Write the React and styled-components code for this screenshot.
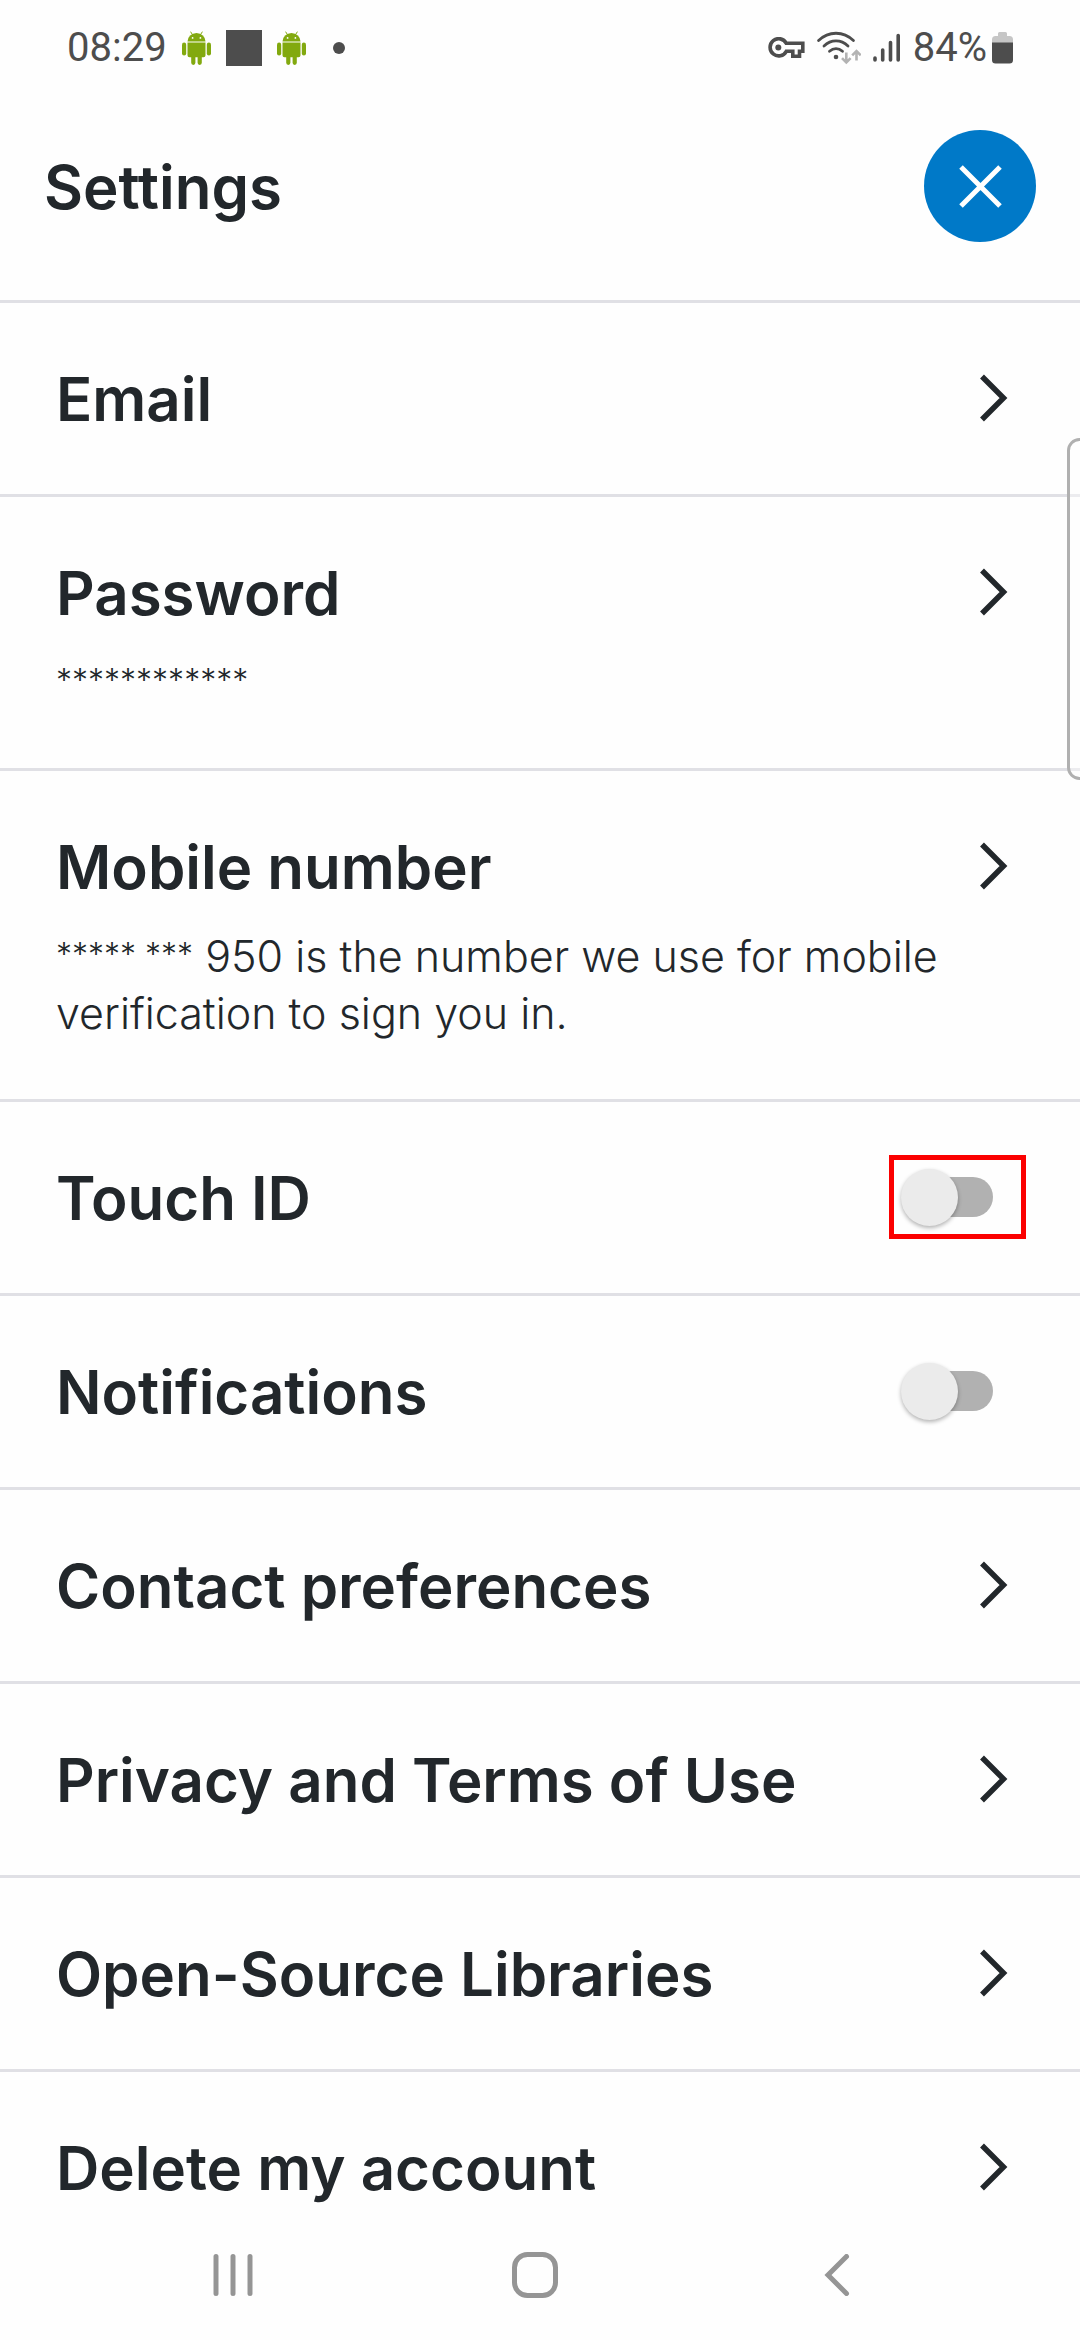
import React from "react";
import styled, { createGlobalStyle, css } from "styled-components";

const ink = "#22272b";
const statusInk = "#4d4d4d";
const rule = "#e0e0e5";

const GlobalStyle = createGlobalStyle`
  *, *::before, *::after { box-sizing: border-box; }
  body { margin: 0; background: #fefefe; }
`;

const Screen = styled.div`
  position: relative;
  display: flex;
  flex-direction: column;
  height: 100vh;
  overflow: hidden;
  background: #fefefe;
  color: ${ink};
  font-family: Inter, "Open Sans", sans-serif;
`;

const StatusBar = styled.div`
  display: flex;
  flex: none;
  align-items: center;
  justify-content: space-between;
  height: 95px;
  padding: 0 67px;
  color: ${statusInk};
  font: 400 40px/48px Roboto, sans-serif;
`;

const StatusGroup = styled.div`
  display: flex;
  align-items: center;
  gap: ${({ $gap }) => $gap}px;
`;

const NotificationSquare = styled.span`
  width: 36px;
  height: 36px;
  background: ${statusInk};
`;

const MoreDot = styled.span`
  width: 12px;
  height: 12px;
  margin-left: 12px;
  border-radius: 50%;
  background: ${statusInk};
`;

const Header = styled.header`
  display: flex;
  flex: none;
  align-items: center;
  justify-content: space-between;
  padding: 35px 44px 58px;
  border-bottom: 3px solid ${rule};
`;

const titleText = css`
  padding-top: 2px;
  font-size: 60px;
  font-weight: 600;
  line-height: 70px;
`;

const PageTitle = styled.h1`
  ${titleText}
  margin: 0;
`;

const CloseButton = styled.button`
  display: grid;
  place-items: center;
  width: 112px;
  height: 112px;
  padding: 0;
  border: 0;
  border-radius: 50%;
  background: #0079c8;
  color: #fff;
`;

const SettingsList = styled.ul`
  flex: 1;
  min-height: 0;
  margin: 0;
  padding: 0;
  overflow-y: auto;
  scrollbar-width: none;
  list-style: none;
`;

const SettingsItem = styled.li`
  border-bottom: 3px solid ${rule};

  &:last-child {
    border-bottom: 0;
  }
`;

const rowLayout = css`
  display: flex;
  flex-direction: column;
  gap: 20px;
  width: 100%;
  padding: 53px 54px 54px 56px;
`;

const LinkRow = styled.button`
  ${rowLayout}
  border: 0;
  background: none;
  color: inherit;
  font-family: inherit;
  text-align: left;
`;

const ToggleRow = styled.label`
  ${rowLayout}
`;

const RowMain = styled.span`
  display: flex;
  align-items: center;
  justify-content: space-between;
  width: 100%;
  height: 84px;
`;

const RowTitle = styled.span`
  ${titleText}
`;

const RowDetail = styled.span`
  padding: 0 40px 3px 0;
  font-size: 43px;
  font-weight: 300;
  line-height: 57px;
`;

const Mask = styled.span`
  font-size: 32px;
  line-height: 32px;
  vertical-align: 6px;
`;

const ChevronCell = styled.span`
  display: flex;
  padding-right: 18px;
`;

const SwitchCell = styled.span`
  display: flex;
  align-items: center;
  width: 137px;
  height: 84px;
  padding-left: 7px;
  border: 5px solid ${({ $highlighted }) => ($highlighted ? "#fb0000" : "transparent")};
`;

const Switch = styled.input`
  appearance: none;
  display: flex;
  align-items: center;
  width: 92px;
  height: 40px;
  margin: 0;
  border-radius: 20px;
  background: linear-gradient(#b1b1b1, #b1b1b1) right / 76px 40px no-repeat;

  &::before {
    content: "";
    width: 57px;
    height: 57px;
    flex: none;
    border-radius: 50%;
    background: #ebebeb;
    box-shadow: 0 2px 4px rgba(0, 0, 0, 0.3);
  }

  &:checked {
    justify-content: flex-end;
  }
`;

const EdgeHandle = styled.div`
  position: absolute;
  top: 438px;
  right: -12px;
  width: 25px;
  height: 342px;
  border: 3px solid #b0b0b0;
  border-radius: 13px;
  background: rgba(255, 255, 255, 0.4);
`;

const NavBar = styled.nav`
  display: grid;
  flex: none;
  grid-template-columns: repeat(3, 1fr);
  height: 130px;
  padding: 0 92px 0 82px;
  background: #fefefe;
`;

const NavButton = styled.button`
  display: grid;
  place-items: center;
  padding: 0;
  border: 0;
  background: none;
  color: #959595;
`;

const AndroidIcon = () => (
  <svg width="29" height="34" viewBox="0 0 29 34" fill="#82a90f" aria-hidden="true">
    <path d="M5.5 10.5a9 8.6 0 0 1 18 0z" />
    <path d="M8.8 1l2 3.2M20.2 1l-2 3.2" stroke="#82a90f" strokeWidth="1" strokeLinecap="round" />
    <circle cx="10.6" cy="6.9" r="0.9" fill="#fff" />
    <circle cx="18.4" cy="6.9" r="0.9" fill="#fff" />
    <path d="M5.5 11.6h18v12.6a2 2 0 0 1-2 2h-1.7v5.6a2.1 2.1 0 0 1-4.2 0v-5.6h-2.2v5.6a2.1 2.1 0 0 1-4.2 0v-5.6H7.5a2 2 0 0 1-2-2z" />
    <rect x="0" y="11.6" width="4.2" height="13" rx="2.1" />
    <rect x="24.8" y="11.6" width="4.2" height="13" rx="2.1" />
  </svg>
);

const KeyIcon = () => (
  <svg width="37" height="22" viewBox="0 0 37 22" fill="none" stroke={statusInk} strokeWidth="3.6" aria-hidden="true">
    <path d="M18.3 6.3H34.8v8H31.5v5H24.8v-5H18.3A8.6 8.6 0 1 1 18.3 6.3z" />
    <circle cx="10.3" cy="10.6" r="3" fill={statusInk} stroke="none" />
  </svg>
);

const WifiIcon = () => (
  <svg width="44" height="34" viewBox="0 0 44 34" fill="none" aria-hidden="true">
    <g stroke={statusInk} strokeWidth="2.8" strokeLinecap="round">
      <path d="M1.6 9.6C11.5-.2 26.5-.2 36.4 9.6" />
      <path d="M7 15C14 8.2 24 8.2 31 15" />
      <path d="M12.5 20.3C16.5 16.8 21.5 16.8 25.5 20.3" />
    </g>
    <circle cx="19" cy="26" r="2.3" fill={statusInk} />
    <g stroke="#b3b3b3" strokeWidth="2.6">
      <path d="M29.3 21.5V31M25 27.2l4.3 4.3 4.3-4.3M39.5 29.5V20.5M35.2 24.3l4.3-4.3 4.3 4.3" />
    </g>
  </svg>
);

const SignalIcon = () => (
  <svg width="28" height="30" viewBox="0 0 28 30" stroke={statusInk} strokeWidth="3.6" strokeLinecap="round" aria-hidden="true">
    <path d="M2 25v2M9.7 17v10M17.5 9.5V27M25.2 2.5V27" />
  </svg>
);

const BatteryIcon = () => (
  <svg width="21" height="32" viewBox="0 0 21 32" aria-hidden="true">
    <path d="M0 11V7.5A3.5 3.5 0 0 1 3.5 4H6V1.5A1.5 1.5 0 0 1 7.5 0h6A1.5 1.5 0 0 1 15 1.5V4h2.5A3.5 3.5 0 0 1 21 7.5V11z" fill="#c6c6c6" />
    <path d="M0 10.5h21V28a3.5 3.5 0 0 1-3.5 3.5h-14A3.5 3.5 0 0 1 0 28z" fill={statusInk} />
  </svg>
);

const CloseIcon = () => (
  <svg width="44" height="44" viewBox="0 0 44 44" stroke="currentColor" strokeWidth="5" aria-hidden="true">
    <path d="M3 3l39 39M42 3L3 42" />
  </svg>
);

const ChevronIcon = () => (
  <svg width="28" height="48" viewBox="0 0 28 48" fill="none" stroke={ink} strokeWidth="5.5" aria-hidden="true">
    <path d="M2 2.5L23.5 24L2 45.5" />
  </svg>
);

const RecentsIcon = () => (
  <svg width="40" height="42" viewBox="0 0 40 42" stroke="currentColor" strokeWidth="5" strokeLinecap="round" aria-hidden="true">
    <path d="M3 2.5v37M20 2.5v37M37 2.5v37" />
  </svg>
);

const HomeIcon = () => (
  <svg width="46" height="46" viewBox="0 0 46 46" fill="none" stroke="currentColor" strokeWidth="5" aria-hidden="true">
    <rect x="2.5" y="2.5" width="41" height="41" rx="13" />
  </svg>
);

const BackIcon = () => (
  <svg width="26" height="42" viewBox="0 0 26 42" fill="none" stroke="currentColor" strokeWidth="5" strokeLinecap="round" aria-hidden="true">
    <path d="M22.5 2.5L4 21L22.5 39.5" />
  </svg>
);

const settings = [
  { title: "Email" },
  { title: "Password", masked: "************" },
  {
    title: "Mobile number",
    masked: "***** ***",
    detail: " 950 is the number we use for mobile verification to sign you in.",
  },
  { title: "Touch ID", toggle: true, highlighted: true },
  { title: "Notifications", toggle: true },
  { title: "Contact preferences" },
  { title: "Privacy and Terms of Use" },
  { title: "Open-Source Libraries" },
  { title: "Delete my account" },
];

function Setting({ title, masked, detail, toggle, highlighted }) {
  if (toggle) {
    return (
      <ToggleRow>
        <RowMain>
          <RowTitle>{title}</RowTitle>
          <SwitchCell $highlighted={highlighted}>
            <Switch type="checkbox" role="switch" />
          </SwitchCell>
        </RowMain>
      </ToggleRow>
    );
  }
  return (
    <LinkRow type="button">
      <RowMain>
        <RowTitle>{title}</RowTitle>
        <ChevronCell>
          <ChevronIcon />
        </ChevronCell>
      </RowMain>
      {masked && (
        <RowDetail>
          <Mask>{masked}</Mask>
          {detail}
        </RowDetail>
      )}
    </LinkRow>
  );
}

export default function App() {
  return (
    <Screen>
      <GlobalStyle />
      <StatusBar>
        <StatusGroup $gap={15}>
          <span>08:29</span>
          <AndroidIcon />
          <NotificationSquare />
          <AndroidIcon />
          <MoreDot />
        </StatusGroup>
        <StatusGroup $gap={12}>
          <KeyIcon />
          <WifiIcon />
          <SignalIcon />
          <StatusGroup $gap={5}>
            <span>84%</span>
            <BatteryIcon />
          </StatusGroup>
        </StatusGroup>
      </StatusBar>
      <Header>
        <PageTitle>Settings</PageTitle>
        <CloseButton type="button" aria-label="Close">
          <CloseIcon />
        </CloseButton>
      </Header>
      <SettingsList>
        {settings.map((item) => (
          <SettingsItem key={item.title}>
            <Setting {...item} />
          </SettingsItem>
        ))}
      </SettingsList>
      <NavBar>
        <NavButton type="button" aria-label="Recent apps">
          <RecentsIcon />
        </NavButton>
        <NavButton type="button" aria-label="Home">
          <HomeIcon />
        </NavButton>
        <NavButton type="button" aria-label="Back">
          <BackIcon />
        </NavButton>
      </NavBar>
      <EdgeHandle />
    </Screen>
  );
}
